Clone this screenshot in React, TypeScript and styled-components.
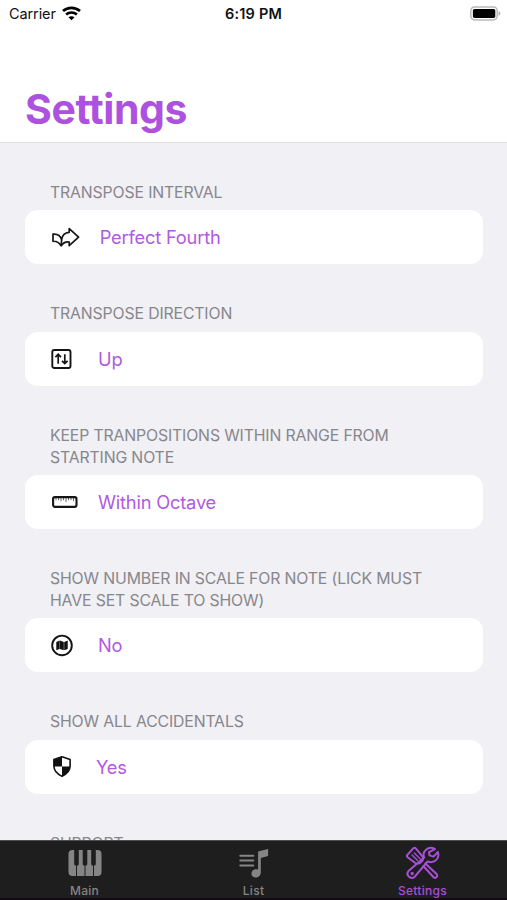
import React from "react";
import styled, { createGlobalStyle } from "styled-components";

const Global = createGlobalStyle`
  * { box-sizing: border-box; }
  body { margin: 0; background: #f1f0f5; font-family: Inter, "Liberation Sans", sans-serif; }
`;

const Screen = styled.div`
  width: 507px;
  height: 900px;
  display: flex;
  flex-direction: column;
  overflow: hidden;
  background: #f1f0f5;
`;

const Header = styled.header`
  flex: none;
  height: 143px;
  background: #fff;
  border-bottom: 1px solid #dfdfe1;
`;

const StatusBar = styled.div`
  height: 27px;
  display: grid;
  grid-template-columns: 1fr auto 1fr;
  align-items: center;
  padding: 0 6px;
  color: #111;
`;

const Carrier = styled.div`
  display: flex;
  align-items: center;
  gap: 6px;
  padding-left: 3px;
  font-size: 14.5px;
  letter-spacing: -0.1px;
`;

const Clock = styled.div`
  font-size: 14.5px;
  font-weight: 600;
  letter-spacing: 0.2px;
`;

const Battery = styled.div`
  display: flex;
  justify-content: flex-end;
`;

const Title = styled.h1`
  margin: 57px 0 0 25px;
  font-size: 41px;
  line-height: 50px;
  font-weight: 700;
  letter-spacing: -0.4px;
  font-feature-settings: "calt" 0, "liga" 0;
  color: #ad52de;
`;

const Content = styled.main`
  flex: 1;
  min-height: 0;
  overflow: hidden;
  padding: 39px 24.5px 0 25px;
  display: flex;
  flex-direction: column;
  gap: 39px;
`;

const Group = styled.section`
  flex: none;
`;

const Label = styled.h2`
  margin: 0 0 6.5px;
  padding: 0 25px;
  font-size: 15.8px;
  line-height: 21.9px;
  font-weight: 400;
  letter-spacing: -0.14px;
  color: #87868c;
  white-space: pre-line;
`;

const Card = styled.div`
  height: 54px;
  border-radius: 12.5px;
  background: #fff;
  display: flex;
  align-items: center;
  padding-left: 26px;
`;

const IconSlot = styled.span<{ $width: number }>`
  width: ${(p) => p.$width}px;
  display: flex;
  align-items: center;
`;

const Value = styled.span`
  font-size: 18.3px;
  letter-spacing: -0.2px;
  color: #b15adf;
`;

const TabBar = styled.nav`
  flex: none;
  height: 60px;
  display: grid;
  grid-template-columns: repeat(3, 1fr);
  background: #1e1e1e;
  border-top: 1px solid #4c4d4c;
  border-bottom: 2px solid #160814;
`;

const Tab = styled.div<{ $active?: boolean }>`
  display: flex;
  flex-direction: column;
  align-items: center;
  padding-top: 5px;
  color: ${(p) => (p.$active ? "#a84fd8" : "#858585")};
`;

const TabLabel = styled.span`
  margin-top: 3px;
  font-size: 12px;
  line-height: 15px;
  font-weight: 500;
  letter-spacing: 0.3px;
`;

const Wifi = () => (
  <svg width="19" height="15" viewBox="0 0 19 15" fill="none" stroke="#000" strokeWidth="2.7">
    <path d="M1 5.1C5.7.8 13.3.8 18 5.1" />
    <path d="M4.1 8.5c3.1-2.7 7.7-2.7 10.8 0" />
    <path d="M9.5 14.3 6.5 11.3c1.7-1.5 4.3-1.5 6 0Z" fill="#000" stroke="none" />
  </svg>
);

const BatteryIcon = () => (
  <svg width="31" height="15" viewBox="0 0 31 15">
    <rect x=".8" y=".9" width="26.4" height="13" rx="3.8" fill="#fff" stroke="#b9b9b9" strokeWidth="1.5" />
    <rect x="2.9" y="3" width="22.4" height="8.9" rx="1.6" fill="#000" />
    <path d="M28.6 5.2c2.2.7 2.2 3.8 0 4.5Z" fill="#aaa" />
  </svg>
);

const ArrowsIcon = () => (
  <svg width="30" height="22" viewBox="0 0 30 22" fill="none" stroke="#151515" strokeWidth="1.7" strokeLinejoin="round">
    <path d="M18.2 2.6 27.6 11.2 18.2 19.6V16c-3.7-.4-6.1.8-8 3.9-2-3.2-4.6-4.9-8.2-4.6V8.2c4.6-.5 7.3 1.2 8.6 5.5.6-4.5 3.4-7.2 7.6-7.4Z" />
    <path d="M10.6 13.7 10.2 19.9" />
  </svg>
);

const UpDownIcon = () => (
  <svg width="22" height="22" viewBox="0 0 22 22" fill="none" stroke="#151515" strokeWidth="1.7">
    <rect x="1.3" y="2" width="18.2" height="18" rx="2" strokeWidth="1.9" />
    <path d="M7.2 15.7V6.5M4.4 9.1l2.8-2.8L10 9.1M13.8 6.2v9.3M11 12.8l2.8 2.8 2.8-2.8" />
  </svg>
);

const RulerIcon = () => (
  <svg width="28" height="22" viewBox="0 0 28 22" fill="none" stroke="#151515">
    <rect x="2.1" y="6.1" width="23.4" height="9.8" rx="1.8" strokeWidth="2.1" />
    <path d="M5 7v2.2M7.5 7v2.2M10 7v3.2M12.5 7v2.2M15 7v4M17.5 7v2.2M20 7v2.2M22.5 7v3.2" strokeWidth=".9" opacity=".7" />
  </svg>
);

const MapIcon = () => (
  <svg width="24" height="24" viewBox="0 0 24 24">
    <g transform="translate(-1 0.4)">
      <circle cx="12" cy="12" r="9.8" fill="none" stroke="#151515" strokeWidth="1.9" />
      <path d="m6.3 8.5 3.3-1.4v8.6l-3.3 1.2ZM9.9 7.1l3.9 1.4v8.4l-3.9-1.3ZM14.2 8.5l3.5-1.4v8.4l-3.5 1.4Z" fill="#111" />
    </g>
  </svg>
);

const ShieldIcon = () => (
  <svg width="24" height="24" viewBox="0 0 24 24">
    <g transform="translate(-1 -0.4)">
      <path d="M12 2.2 20.1 5v6.5c0 4.6-3.1 7.9-8.1 10.2-5-2.3-8.1-5.6-8.1-10.2V5Z" fill="#fff" stroke="#111" strokeWidth="1.6" strokeLinejoin="round" />
      <path d="M12 2.2V12H3.9V5ZM12 12h8.1c-.1 4.4-3.3 7.5-8.1 9.7Z" fill="#111" />
    </g>
  </svg>
);

const PianoIcon = () => (
  <svg width="34" height="34" viewBox="0 0 34 34">
    <rect x=".5" y="4" width="33" height="26" rx="4" fill="currentColor" />
    <path d="M8.5 17v13M17 17v13M25.5 17v13" stroke="#1e1e1e" strokeWidth="1" />
    <path d="M6.2 4h4.6v14q0 1.5-1.5 1.5H7.7q-1.5 0-1.5-1.5ZM14.7 4h4.6v14q0 1.5-1.5 1.5h-1.6q-1.5 0-1.5-1.5ZM23.2 4h4.6v14q0 1.5-1.5 1.5h-1.6q-1.5 0-1.5-1.5Z" fill="#1e1e1e" />
  </svg>
);

const MusicListIcon = () => (
  <svg width="34" height="34" viewBox="0 0 34 34">
    <path d="M3.3 9.7h13M3.3 14.6h13M3.3 19.5h13" stroke="currentColor" strokeWidth="2" strokeLinecap="round" />
    <path d="m21.1 5.5 10-2.4v7l-7.3 2V26.3c0 6.9-9.4 6.7-9.4 1.5 0-3.5 3.5-5.2 6.7-4.1Z" fill="currentColor" />
  </svg>
);

const ToolsIcon = () => (
  <svg width="36" height="34" viewBox="0 0 36 34" fill="none" stroke="currentColor" strokeWidth="2" strokeLinecap="round" strokeLinejoin="round">
    <path d="M2.4 8.8 8.4 2.2q1.2-1 2.4.2l7.2 8.7-.3 3.4-3 2.8-3.4.4L2.6 11.3q-1.3-1.3-.2-2.5Z" />
    <path d="m7 9 5.6 5.6M9.2 7l5.9 5.8" strokeWidth="1.4" />
    <path d="m20.4 17.4 11.4 10.8c1.4 2-.9 4.5-3 3.3L18.3 20" />
    <path d="M30 3.1c-6.9-3.9-13.4 2.5-10.8 8.5L3.7 24.8c-3.6 4 1.7 9.4 6.1 5.9L22.6 15.5c6 2.3 12.6-2.2 10.3-9.5l-4.4 4.6-4-1.2-.5-3.3Z" />
    <circle cx="7.2" cy="27.5" r="1" strokeWidth="1.4" />
  </svg>
);

const settings = [
  { label: "TRANSPOSE INTERVAL", value: "Perfect Fourth", icon: <ArrowsIcon />, width: 48.7 },
  { label: "TRANSPOSE DIRECTION", value: "Up", icon: <UpDownIcon />, width: 47 },
  { label: "KEEP TRANPOSITIONS WITHIN RANGE FROM\nSTARTING NOTE", value: "Within Octave", icon: <RulerIcon />, width: 47 },
  { label: "SHOW NUMBER IN SCALE FOR NOTE (LICK MUST\nHAVE SET SCALE TO SHOW)", value: "No", icon: <MapIcon />, width: 47 },
  { label: "SHOW ALL ACCIDENTALS", value: "Yes", icon: <ShieldIcon />, width: 45 },
];

export default function App() {
  return (
    <>
      <Global />
      <Screen>
        <Header>
          <StatusBar>
            <Carrier>Carrier <Wifi /></Carrier>
            <Clock>6:19 PM</Clock>
            <Battery><BatteryIcon /></Battery>
          </StatusBar>
          <Title>Settings</Title>
        </Header>
        <Content>
          {settings.map((s) => (
            <Group key={s.label}>
              <Label>{s.label}</Label>
              <Card>
                <IconSlot $width={s.width}>{s.icon}</IconSlot>
                <Value>{s.value}</Value>
              </Card>
            </Group>
          ))}
          <Group>
            <Label>SUPPORT</Label>
          </Group>
        </Content>
        <TabBar>
          <Tab><PianoIcon /><TabLabel>Main</TabLabel></Tab>
          <Tab><MusicListIcon /><TabLabel>List</TabLabel></Tab>
          <Tab $active><ToolsIcon /><TabLabel>Settings</TabLabel></Tab>
        </TabBar>
      </Screen>
    </>
  );
}
